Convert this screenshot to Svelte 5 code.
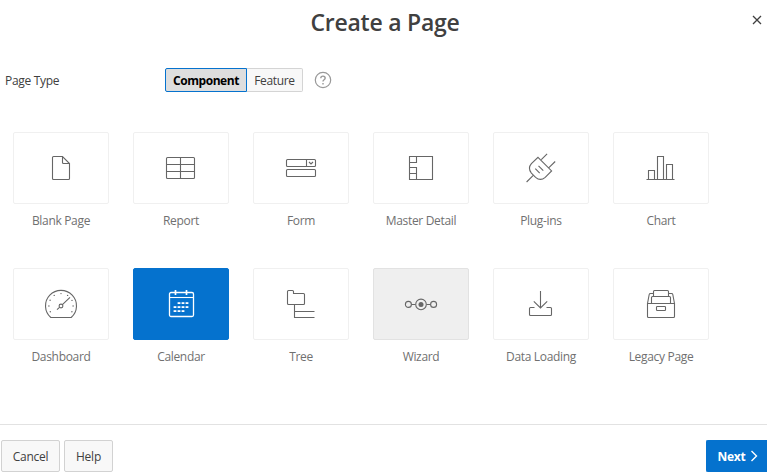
<script>
  let pageType = $state('Component');
  let selected = $state('Calendar');
  const types = ['Component', 'Feature'];
  const pages = ['Blank Page', 'Report', 'Form', 'Master Detail', 'Plug-ins', 'Chart', 'Dashboard', 'Calendar', 'Tree', 'Wizard', 'Data Loading', 'Legacy Page'];
  const ticks = [[3.9, 18], [5.1, 12.2], [9.2, 7.4], [16, 5.6], [22.6, 7.4], [28.1, 18], [5.3, 23.8], [26.9, 23.8], [27, 12.4]];
  const days = [[13, 14], [17, 14], [21, 14], [9, 18], [13, 18], [17, 18], [21, 18], [9, 22], [13, 22], [17, 22]];
</script>

<div class="dialog">
  <header>
    <h1>Create a Page</h1>
    <button class="close" aria-label="Close">
      <svg width="10" height="10" viewBox="0 0 10 10"><path d="M1 1l8 8M9 1l-8 8" /></svg>
    </button>
  </header>

  <div class="field">
    <span class="label">Page Type</span>
    <div class="pills">
      {#each types as type}
        <button class:active={pageType === type} onclick={() => (pageType = type)}>{type}</button>
      {/each}
    </div>
    <svg class="help" width="18" height="18" viewBox="0 0 18 18">
      <circle cx="9" cy="9" r="7.7" />
      <path class="mark" d="M6.8 7.2C6.8 4.4 11.2 4.4 11.2 7.1C11.2 8.8 9 8.7 9 10.5M9 12v1.4" />
    </svg>
  </div>

  <main>
    {#each pages as page}
      <button class="item" onclick={() => (selected = page)}>
        <span class="card" class:selected={selected === page} class:hovered={page === 'Wizard'}>
          <svg width="32" height="32" viewBox="0 0 32 32">
            {#if page === 'Blank Page'}
              <path d="M8.5 4.5h9l7 7v15a1 1 0 0 1-1 1h-15a1 1 0 0 1-1-1v-21a1 1 0 0 1 1-1zM17.5 4.5v6a1 1 0 0 0 1 1h6" />
            {:else if page === 'Report'}
              <rect x="1.5" y="5.5" width="28" height="21" rx="1" />
              <path d="M1.5 12.5h28M1.5 19.5h28M15.5 5.5v21" />
            {:else if page === 'Form'}
              <rect x="1.5" y="7.5" width="29" height="7" rx="1" />
              <rect x="1.5" y="17.5" width="29" height="7" rx="1" />
              <path d="M21.5 7.5v7M24 10l2 2 2-2" />
            {:else if page === 'Master Detail'}
              <path d="M4.5 4.5h23v23h-23zM11.5 4.5v6h-7M4.5 15.5h7v12M4.5 21.5h7" />
            {:else if page === 'Plug-ins'}
              <path d="M13 5.3L26.6 18.9l-6.4 6.4q-4.8 4.2-9.6 0l-4.2-4.2q-4-4.8 0-9.4zM16.3 7.7l5.8-5.8M23.9 15.6l6.3-6.1M1.6 30l6.4-6.3M10.3 16.7l4.4 4.4M13.5 13.9l4.8 4.8" />
            {:else if page === 'Chart'}
              <path d="M1.5 27.5h28M3.5 27.5v-9h6v9M12.5 27.5v-23h6v23M21.5 27.5v-15h6v15" />
            {:else if page === 'Dashboard'}
              <path d="M5.8 29.5A15.5 15.5 0 1 1 26.2 29.5z" />
              <circle cx="16" cy="18" r="1.9" />
              <path d="M12 21.7l2.5-2.3M17.4 16.6L25 9.3" />
              {#each ticks as [x, y]}<circle class="solid" cx={x} cy={y} r=".7" />{/each}
            {:else if page === 'Calendar'}
              <rect x="4.5" y="4.5" width="24" height="24" rx="1.5" stroke-width="1.3" />
              <path d="M4.5 9.5h24" />
              <path d="M10.5 2v5M21.5 2v5" stroke-width="1.7" />
              {#each days as [x, y]}<rect class="solid" x={x - 0.4} y={y + 0.2} width="2.8" height="1.8" />{/each}
            {:else if page === 'Tree'}
              <path d="M3.5 2.5h4a1 1 0 0 1 1 1v2h10a1 1 0 0 1 1 1v9a1 1 0 0 1-1 1h-15a1 1 0 0 1-1-1v-12a1 1 0 0 1 1-1zM9.5 16.5v13h20M9.5 23.5h20" />
            {:else if page === 'Wizard'}
              <circle cx="3.4" cy="16.4" r="3" />
              <circle cx="16" cy="16.4" r="5.3" />
              <circle class="solid" cx="16" cy="16.4" r="2.5" />
              <circle cx="28.6" cy="16.4" r="3" />
              <path d="M6.5 16.5h4M21.5 16.5h4" />
            {:else if page === 'Data Loading'}
              <path d="M15.5 3v17M8.8 13.3l6.7 6.7 6.7-6.7M9.5 19.5h-4a1 1 0 0 0-1 1v6a1 1 0 0 0 1 1h20a1 1 0 0 0 1-1v-6a1 1 0 0 0-1-1h-4" />
            {:else}
              <path d="M2.5 15.5h27v13a1 1 0 0 1-1 1h-25a1 1 0 0 1-1-1zM2.5 15.5l1.7-9q.2-1 1.3-1h3M29.5 15.5l-1.7-9q-.2-1-1.3-1h-3M8.5 8.5v-5a1 1 0 0 1 1-1h13a1 1 0 0 1 1 1v5M6.5 15.5v-6a1 1 0 0 1 1-1h17a1 1 0 0 1 1 1v6" />
              <rect x="11.5" y="18.5" width="9" height="4" rx=".7" />
            {/if}
          </svg>
        </span>
        <span class="name">{page}</span>
      </button>
    {/each}
  </main>

  <footer>
    <button>Cancel</button>
    <button class="help-button">Help</button>
    <button class="next">Next
      <svg width="8" height="12" viewBox="0 0 8 12"><path d="M1.5 1l5 5-5 5" /></svg>
    </button>
  </footer>
</div>

<style>
  :global(body) { margin: 0; background: #fff; }
  .dialog {
    width: 767px; height: 475px; box-sizing: border-box; overflow: hidden;
    display: flex; flex-direction: column;
    font-family: "Open Sans", "Noto Sans", sans-serif; font-size: 12px; color: #404040;
  }
  button { font: inherit; color: inherit; box-sizing: border-box; margin: 0; padding: 0; white-space: nowrap; }
  svg { display: block; fill: none; stroke: currentColor; }
  header { height: 44px; flex: none; display: grid; grid-template-columns: 36px 1fr 36px; align-items: center; }
  h1 { grid-column: 2; margin: 0; text-align: center; font-size: 23px; line-height: 32px; font-weight: 600; letter-spacing: -.25px; padding-left: 3px; }
  .close { border: 0; background: none; display: flex; justify-content: flex-end; padding: 0 5px 5px 0; }
  .close svg { stroke-width: 1.3; }
  .field { height: 24px; margin-top: 24px; display: flex; align-items: center; flex: none; }
  .label { width: 160px; padding-left: 5px; letter-spacing: -.3px; }
  .pills { display: flex; }
  .pills button { height: 24px; width: 56px; border: 1px solid #d4d4d4; border-left: 0; background: #f8f8f8; border-radius: 0 2px 2px 0; line-height: 20px; padding-top: 2px; letter-spacing: -.35px; }
  .pills button:first-child { width: 82px; border-left: 1px solid #d4d4d4; border-radius: 2px 0 0 2px; }
  .pills .active { border-color: #0572ce !important; background: #dedede; color: #000; font-weight: 700; letter-spacing: -.45px; }
  .help { margin-left: 11px; color: #999; stroke-width: 1.2; }
  .help .mark { stroke-width: 1.4; }
  main { display: grid; grid-template-columns: repeat(6, 96px); gap: 32px 24px; padding: 40px 13px 0; }
  .item { border: 0; background: none; color: #707070; height: 104px; display: flex; flex-direction: column; align-items: center; }
  .card { width: 96px; height: 72px; box-sizing: border-box; border: 1px solid #f0f0f0; border-radius: 2px; display: flex; align-items: center; justify-content: center; color: #666; }
  .card svg { stroke-width: 1.1; overflow: visible; }
  .card.hovered { background: #efefef; border-color: #e2e2e2; }
  .card.selected { background: #0572ce; border-color: #0572ce; color: #fff; }
  .solid { fill: currentColor; stroke: none; }
  .name { line-height: 18px; margin-top: 8px; letter-spacing: -.32px; }
  footer { margin-top: auto; height: 51px; flex: none; box-sizing: border-box; border-top: 1px solid #e2e2e2; padding: 15px 0 0 1px; display: flex; gap: 4px; }
  footer button { width: 59px; height: 32px; border: 1px solid #d2d2d2; border-radius: 2px; background: #f8f8f8; letter-spacing: -.25px; }
  footer .help-button { width: 49px; }
  footer .next { width: 61px; margin-left: auto; padding-left: 1px; border-color: #0572ce; border-right: 0; border-radius: 2px 0 0 2px; background: #0572ce; color: #fff; font-weight: 700; display: flex; align-items: center; justify-content: center; gap: 4px; }
  footer svg { stroke-width: 1.4; }
</style>
